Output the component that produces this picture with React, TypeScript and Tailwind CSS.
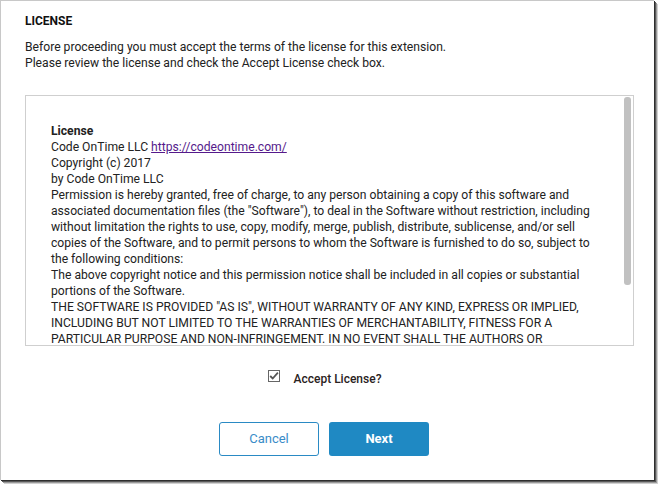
const LICENSE_LINES = [
  "Permission is hereby granted, free of charge, to any person obtaining a copy of this software and associated documentation files (the \"Software\"), to deal in the Software without restriction, including without limitation the rights to use, copy, modify, merge, publish, distribute, sublicense, and/or sell copies of the Software, and to permit persons to whom the Software is furnished to do so, subject to the following conditions:",
  "The above copyright notice and this permission notice shall be included in all copies or substantial portions of the Software.",
  "THE SOFTWARE IS PROVIDED \"AS IS\", WITHOUT WARRANTY OF ANY KIND, EXPRESS OR IMPLIED, INCLUDING BUT NOT LIMITED TO THE WARRANTIES OF MERCHANTABILITY, FITNESS FOR A PARTICULAR PURPOSE AND NON-INFRINGEMENT. IN NO EVENT SHALL THE AUTHORS OR COPYRIGHT HOLDERS BE LIABLE FOR ANY CLAIM, DAMAGES OR OTHER LIABILITY, WHETHER IN AN ACTION OF CONTRACT, TORT OR OTHERWISE, ARISING FROM, OUT OF OR IN CONNECTION WITH THE SOFTWARE OR THE USE OR OTHER DEALINGS IN THE SOFTWARE.",
];

export default function App() {
  return (
    <div className="h-[484px] w-[658px] bg-white font-['Roboto',sans-serif] text-[12.15px] text-[#222]">
      <div className="h-[480px] w-[654px] border-l border-t border-[#c8c8c8] bg-white shadow-[1px_1px_0_#2e2e2e,2px_2px_0_#5a5a5a,3px_3px_0_#9a9a9a,4px_4px_0_#d0d0d0]">
        {/* Header */}
        <div className="px-6 pt-[12px]">
          <h1 className="text-[12px] font-bold leading-[16px] text-[#111]">LICENSE</h1>
          <p className="mt-[10px] leading-[16px]">
            Before proceeding you must accept the terms of the license for this extension.
            <br />
            Please review the license and check the Accept License check box.
          </p>
        </div>

        {/* License text box */}
        <div className="relative ml-6 mt-[24px] h-[251px] w-[609px] overflow-hidden border border-[#cfcfcf]">
          <div className="w-[575px] pl-[25px] pt-[27px] leading-[16px]">
            <div className="font-bold">License</div>
            <div>
              Code OnTime LLC{" "}
              <a href="#" className="text-[#551a8b] underline">
                https://codeontime.com/
              </a>
            </div>
            <div>Copyright (c) 2017</div>
            <div>by Code OnTime LLC</div>
            {LICENSE_LINES.map((line) => (
              <div key={line.slice(0, 20)}>{line}</div>
            ))}
          </div>
          {/* scrollbar thumb */}
          <div className="absolute right-[2px] top-[1px] h-[188px] w-[7px] rounded-[3px] bg-[#c1c1c1]" />
        </div>

        {/* Accept */}
        <div className="mt-[24px] flex items-center justify-center gap-[14px] pr-[6px]">
          <svg width="12" height="12" viewBox="0 0 12 12" className="mb-[6px] shrink-0">
            <rect x="0.5" y="0.5" width="11" height="11" fill="white" stroke="#666" />
            <path d="M2.2 6 L4.7 8.5 L9.9 2.6" fill="none" stroke="#555" strokeWidth="1.8" />
          </svg>
          <span className="text-[12px] font-medium text-[#2a2222]">Accept License?</span>
        </div>

        {/* Buttons */}
        <div className="mt-[34px] flex justify-center gap-[10px] pr-[7px]">
          <button
            type="button"
            className="h-[34px] w-[100px] rounded-[3px] border border-[#2a8ac4] bg-white text-[13px] text-[#3a8cc8]"
          >
            Cancel
          </button>
          <button
            type="button"
            className="h-[34px] w-[100px] rounded-[3px] bg-[#1f89c3] text-[13px] font-bold text-white"
          >
            Next
          </button>
        </div>
      </div>
    </div>
  );
}
